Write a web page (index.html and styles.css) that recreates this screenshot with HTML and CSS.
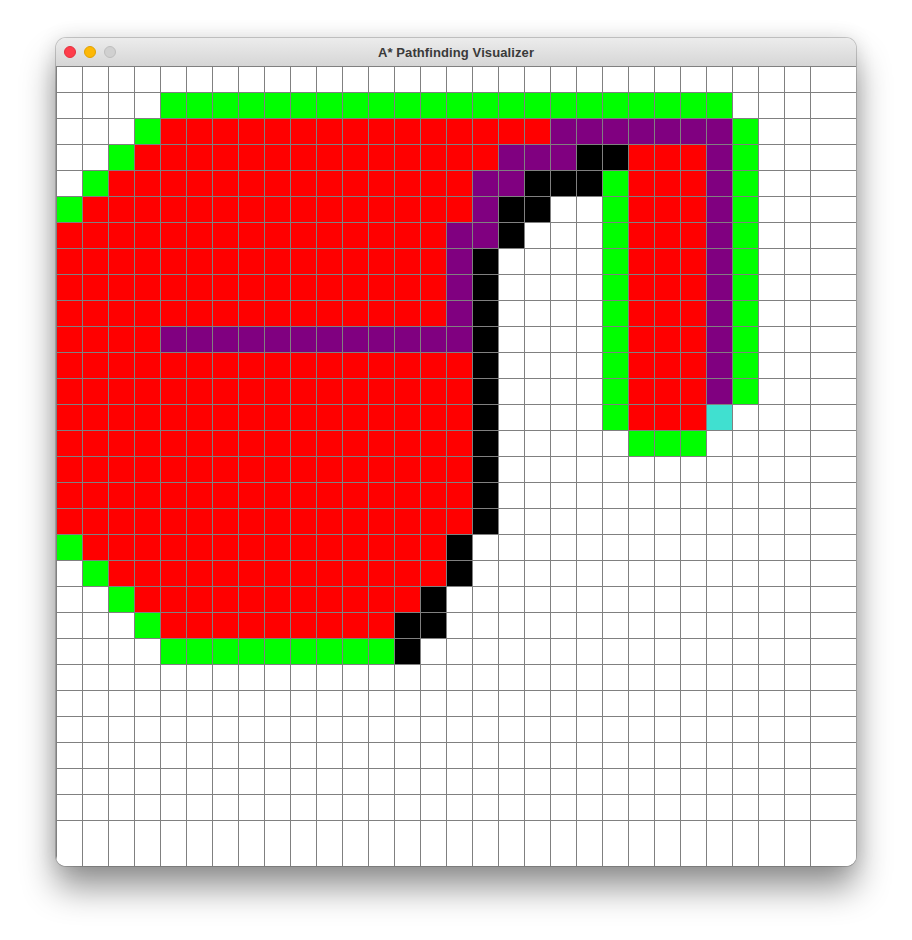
FILE: index.html
```html
<!DOCTYPE html>
<html lang="en">
<head>
<meta charset="utf-8">
<title>A* Pathfinding Visualizer</title>
<link rel="stylesheet" href="styles.css">
</head>
<body>
<div class="window">
  <div class="titlebar">
    <div class="lights">
      <span class="light light-close"></span>
      <span class="light light-min"></span>
      <span class="light light-max"></span>
    </div>
    <div class="title">A* Pathfinding Visualizer</div>
    <div></div>
  </div>
  <div class="board">
    <div class="grid" id="grid"></div>
  </div>
</div>
<script src="script.js"></script>
</body>
</html>
```
FILE: styles.css
```css
html, body {
  margin: 0;
  padding: 0;
  background: #ffffff;
}
body {
  font-family: "Liberation Sans", Arial, sans-serif;
  min-height: 940px;
  padding-top: 38px;
  box-sizing: border-box;
}
.window {
  margin-left: 56px;
  width: 800px;
  border-radius: 10px;
  overflow: hidden;
  background: #ffffff;
  box-shadow:
    0 0 0 1px rgba(0, 0, 0, 0.18),
    0 22px 34px rgba(0, 0, 0, 0.42),
    0 0 20px rgba(0, 0, 0, 0.12);
}
.titlebar {
  height: 28px;
  display: grid;
  grid-template-columns: 1fr auto 1fr;
  align-items: center;
  background: linear-gradient(#ececec, #d6d6d6);
}
.lights {
  display: flex;
  gap: 8px;
  padding-left: 8px;
}
.light {
  width: 12px;
  height: 12px;
  border-radius: 50%;
  box-sizing: border-box;
}
.light-close {
  background: #fe3d4b;
  border: 1px solid #e2313e;
}
.light-min {
  background: #fdb806;
  border: 1px solid #e0a200;
}
.light-max {
  background: #d0d0d0;
  border: 1px solid #bdbdbd;
}
.title {
  font-size: 13px;
  font-weight: bold;
  color: #3a3a3a;
  letter-spacing: 0.1px;
}
.board {
  width: 800px;
  height: 800px;
  background: #ffffff;
}
.grid {
  display: grid;
  width: 800px;
  height: 800px;
  grid-template-columns: repeat(29, 26px) 46px;
  grid-template-rows: repeat(29, 26px) 46px;
}
.cell {
  box-sizing: border-box;
  border-left: 1px solid #808080;
  border-top: 1px solid #808080;
  background: #ffffff;
}
.cell.g { background: #00ff00; }
.cell.r { background: #ff0000; }
.cell.p { background: #800080; }
.cell.k { background: #000000; }
.cell.t { background: #40e0d0; }
```
FILE: script.js
```js
var rows = [
  "..............................",
  "....gggggggggggggggggggggg....",
  "...grrrrrrrrrrrrrrrpppppppg...",
  "..grrrrrrrrrrrrrrpppkkrrrpg...",
  ".grrrrrrrrrrrrrrppkkkgrrrpg...",
  "grrrrrrrrrrrrrrrpkk..grrrpg...",
  "rrrrrrrrrrrrrrrppk...grrrpg...",
  "rrrrrrrrrrrrrrrpk....grrrpg...",
  "rrrrrrrrrrrrrrrpk....grrrpg...",
  "rrrrrrrrrrrrrrrpk....grrrpg...",
  "rrrrppppppppppppk....grrrpg...",
  "rrrrrrrrrrrrrrrrk....grrrpg...",
  "rrrrrrrrrrrrrrrrk....grrrpg...",
  "rrrrrrrrrrrrrrrrk....grrrt....",
  "rrrrrrrrrrrrrrrrk.....ggg.....",
  "rrrrrrrrrrrrrrrrk.............",
  "rrrrrrrrrrrrrrrrk.............",
  "rrrrrrrrrrrrrrrrk.............",
  "grrrrrrrrrrrrrrk..............",
  ".grrrrrrrrrrrrrk..............",
  "..grrrrrrrrrrrk...............",
  "...grrrrrrrrrkk...............",
  "....gggggggggk................",
  "..............................",
  "..............................",
  "..............................",
  "..............................",
  "..............................",
  "..............................",
  ".............................."
];
var grid = document.getElementById("grid");
var frag = document.createDocumentFragment();
rows.forEach(function (row) {
  for (var i = 0; i < 30; i++) {
    var ch = row.charAt(i) || ".";
    var d = document.createElement("div");
    d.className = ch === "." ? "cell" : "cell " + ch;
    frag.appendChild(d);
  }
});
grid.appendChild(frag);
```
